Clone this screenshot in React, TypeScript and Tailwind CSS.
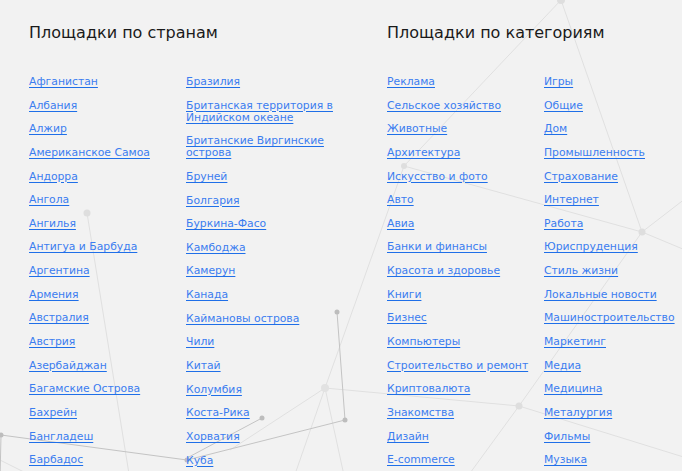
const countries1 = [
  'Афганистан',
  'Албания',
  'Алжир',
  'Американское Самоа',
  'Андорра',
  'Ангола',
  'Ангилья',
  'Антигуа и Барбуда',
  'Аргентина',
  'Армения',
  'Австралия',
  'Австрия',
  'Азербайджан',
  'Багамские Острова',
  'Бахрейн',
  'Бангладеш',
  'Барбадос',
];

const countries2 = [
  'Бразилия',
  'Британская территория в Индийском океане',
  'Британские Виргинские острова',
  'Бруней',
  'Болгария',
  'Буркина-Фасо',
  'Камбоджа',
  'Камерун',
  'Канада',
  'Каймановы острова',
  'Чили',
  'Китай',
  'Колумбия',
  'Коста-Рика',
  'Хорватия',
  'Куба',
];

const categories1 = [
  'Реклама',
  'Сельское хозяйство',
  'Животные',
  'Архитектура',
  'Искусство и фото',
  'Авто',
  'Авиа',
  'Банки и финансы',
  'Красота и здоровье',
  'Книги',
  'Бизнес',
  'Компьютеры',
  'Строительство и ремонт',
  'Криптовалюта',
  'Знакомства',
  'Дизайн',
  'E-commerce',
];

const categories2 = [
  'Игры',
  'Общие',
  'Дом',
  'Промышленность',
  'Страхование',
  'Интернет',
  'Работа',
  'Юриспруденция',
  'Стиль жизни',
  'Локальные новости',
  'Машиностроительство',
  'Маркетинг',
  'Медиа',
  'Медицина',
  'Металургия',
  'Фильмы',
  'Музыка',
];

// background network drawing
const lightLines = [
  [561, 0, 404, 166],
  [561, 0, 642, 232],
  [404, 166, 642, 232],
  [404, 166, 325, 388],
  [325, 388, 293, 480],
  [325, 388, 345, 480],
  [325, 388, 230, 450],
  [325, 388, 519, 406],
  [87, 213, 130, 480],
  [642, 232, 519, 406],
  [642, 232, 690, 252],
  [642, 232, 690, 195],
  [519, 406, 690, 459],
  [519, 406, 465, 480],
  [0, 460, 40, 480],
];

const darkLines = [
  [1, 435, 187, 460],
  [187, 460, 345, 420],
  [262, 418, 187, 458],
  [337, 312, 345, 420],
  [1, 435, 0, 480],
];

function Network() {
  return (
    <svg className="pointer-events-none absolute inset-0 h-full w-full" viewBox="0 0 682 471" preserveAspectRatio="none">
      {lightLines.map(([x1, y1, x2, y2], i) => (
        <line key={'l' + i} x1={x1} y1={y1} x2={x2} y2={y2} stroke="#e0e0e0" strokeWidth="1" />
      ))}
      {darkLines.map(([x1, y1, x2, y2], i) => (
        <line key={'d' + i} x1={x1} y1={y1} x2={x2} y2={y2} stroke="#c4c4c4" strokeWidth="1" />
      ))}
      <circle cx="561" cy="0" r="4" fill="#dedede" />
      <circle cx="87" cy="213" r="3.5" fill="#dedede" />
      <circle cx="404" cy="166" r="3" fill="#dedede" />
      <circle cx="642" cy="232" r="3.5" fill="#dedede" />
      <circle cx="519" cy="406" r="3.5" fill="#dedede" />
      <circle cx="325" cy="388" r="4" fill="#e2e2e2" />
      <circle cx="337" cy="312" r="2.5" fill="#bdbdbd" />
      <circle cx="345" cy="420" r="2.5" fill="#bdbdbd" />
      <circle cx="262" cy="418" r="2.5" fill="#bdbdbd" />
      <circle cx="1" cy="435" r="2.5" fill="#bdbdbd" />
      <circle cx="187" cy="460" r="2.5" fill="#bdbdbd" />
    </svg>
  );
}

function LinkColumn({ items }: { items: string[] }) {
  return (
    <ul className="flex w-[150px] flex-col gap-[11.65px]">
      {items.map((item) => (
        <li key={item} className="text-[10.8px] leading-[12px]">
          <a href="#" className="text-[#3b7df0] underline decoration-[#1f6fe8] underline-offset-2">
            {item}
          </a>
        </li>
      ))}
    </ul>
  );
}

function Section({ title, left, right }: { title: string; left: string[]; right: string[] }) {
  return (
    <section className="w-[358px] shrink-0">
      <h2 className="text-[16px] leading-[20px] text-[#1a1a1a]">{title}</h2>
      <div className="mt-[33px] flex gap-[7px]">
        <LinkColumn items={left} />
        <LinkColumn items={right} />
      </div>
    </section>
  );
}

export default function App() {
  return (
    <div
      className="relative h-[471px] w-[682px] overflow-hidden bg-[#f2f2f2]"
      style={{ fontFamily: '"DejaVu Sans", sans-serif' }}
    >
      <Network />
      <div className="relative flex pl-[29px] pt-[23px]">
        <Section title="Площадки по странам" left={countries1} right={countries2} />
        <Section title="Площадки по категориям" left={categories1} right={categories2} />
      </div>
    </div>
  );
}
